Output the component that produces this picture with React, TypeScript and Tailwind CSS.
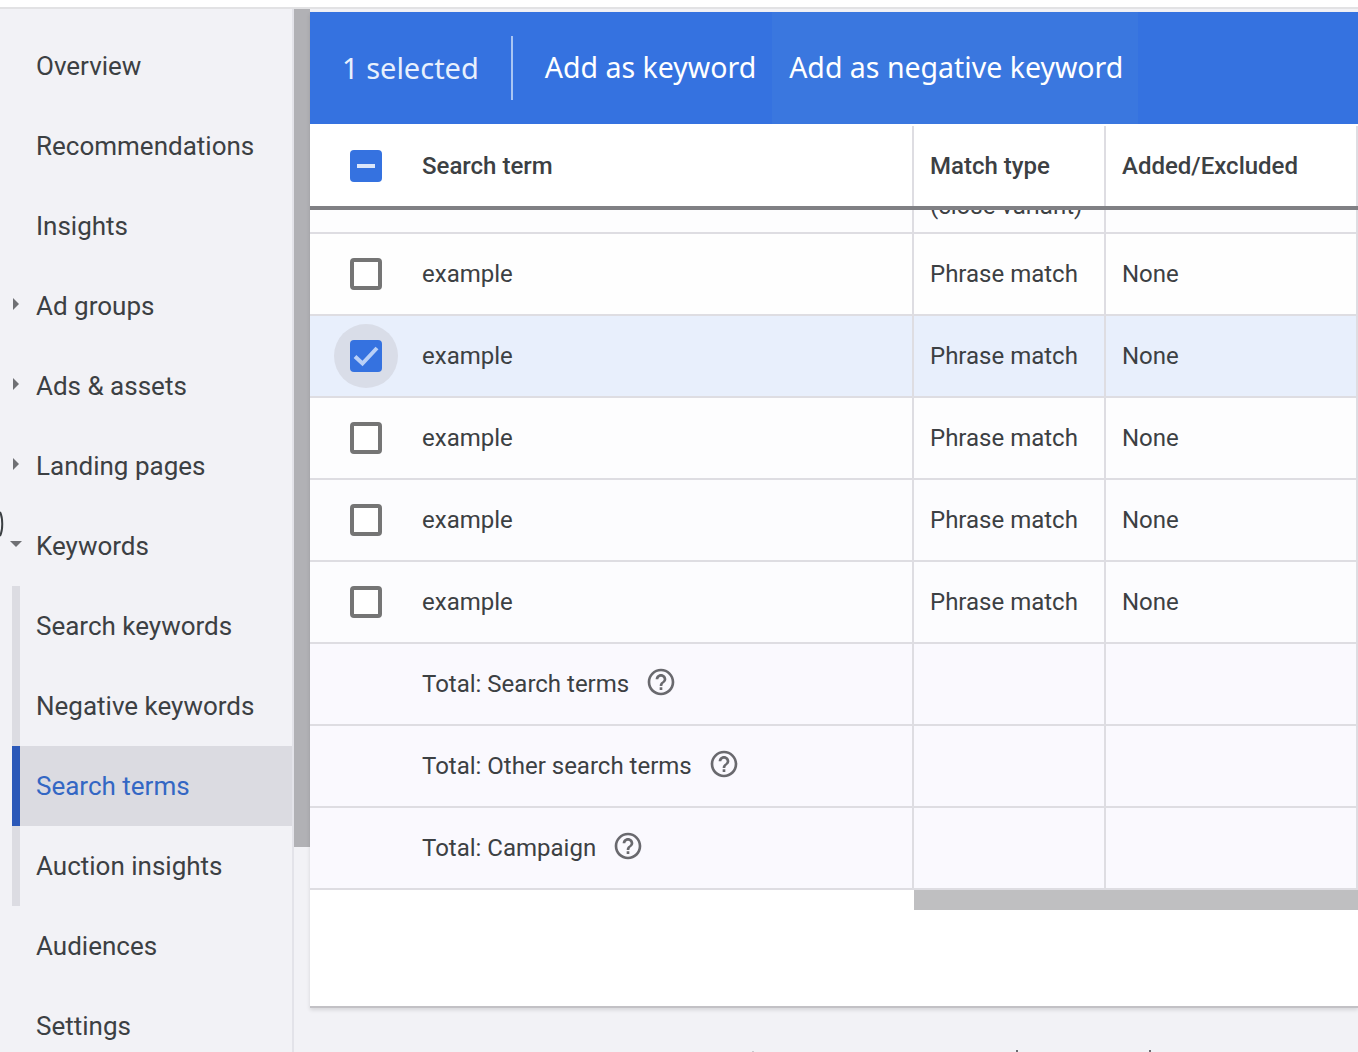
import React from 'react';
import { MdHelpOutline } from 'react-icons/md';

const rowColors = ['bg-[#fefefe]', 'bg-[#e8effc]', 'bg-[#fdfdfe]', 'bg-[#fcfcfe]', 'bg-[#fcfcfe]'];

const Caret = ({ down }: { down?: boolean }) => (
  <svg className="absolute left-[10px] top-[32px] w-[12px] h-[12px]" viewBox="0 0 12 12">
    {down ? <path d="M0 3h12l-6 6z" fill="#6f7074" /> : <path d="M3 0l6 6-6 6z" fill="#6f7074" />}
  </svg>
);

const NavItem = ({ label, caret, active }: { label: string; caret?: 'right' | 'down'; active?: boolean }) => (
  <div className={`relative h-[80px] flex items-center ${active ? 'bg-[#dbdbe1] text-[#3367c4]' : 'text-[#3c4043]'}`}>
    {caret && <Caret down={caret === 'down'} />}
    <span className="pl-[36px]">{label}</span>
  </div>
);

const SubItem = ({ label, active }: { label: string; active?: boolean }) => (
  <div className={`h-[80px] flex items-center border-l-[8px] ml-[12px] ${active ? 'border-[#2b58b8] bg-[#dbdbe1] text-[#3367c4]' : 'border-[#dcdce2] text-[#3c4043]'}`}>
    <span className="pl-[16px]">{label}</span>
  </div>
);

const Checkbox = ({ state }: { state?: 'checked' | 'mixed' }) => {
  if (!state) return <div className="w-[32px] h-[32px] rounded-[4px] border-[4px] border-[#757575] bg-white" />;
  return (
    <div className="w-[32px] h-[32px] rounded-[4px] bg-[#3572e0] flex items-center justify-center">
      {state === 'mixed' ? (
        <div className="w-[18px] h-[4px] bg-[#dbe6fa]" />
      ) : (
        <svg className="w-[32px] h-[32px]" viewBox="0 0 32 32" fill="none">
          <path d="M5 16.5l7.5 7L27 8" stroke="#b9d0f7" strokeWidth="4" />
        </svg>
      )}
    </div>
  );
};

const Cells = ({ rowClass, first, second, third }: { rowClass: string; first: React.ReactNode; second?: string; third?: string }) => (
  <div className={`grid grid-cols-[604px_192px_252px] h-[82px] border-b-[2px] border-[#dedde2] ${rowClass}`}>
    <div className="flex items-center border-r-[2px] border-[#dedde2]">{first}</div>
    <div className="flex items-center pl-[16px] border-r-[2px] border-[#dedde2]">{second}</div>
    <div className="flex items-center pl-[16px] border-r-[2px] border-[#dedde2]">{third}</div>
  </div>
);

const TermRow = ({ index }: { index: number }) => {
  const selected = index === 1;
  return (
    <Cells
      rowClass={rowColors[index]}
      second="Phrase match"
      third="None"
      first={
        <>
          <div className="w-[112px] flex justify-center">
            <div className={`w-[64px] h-[64px] rounded-full flex items-center justify-center ${selected ? 'bg-[#d9dde8]' : ''}`}>
              <Checkbox state={selected ? 'checked' : undefined} />
            </div>
          </div>
          <span>example</span>
        </>
      }
    />
  );
};

const TotalRow = ({ label }: { label: string }) => (
  <Cells
    rowClass="bg-[#faf9fe]"
    first={
      <div className="pl-[112px] flex items-center">
        <span>{label}</span>
        <MdHelpOutline className="ml-[16px] -mt-[4px] text-[#69696e]" size={32} />
      </div>
    }
  />
);

export default function App() {
  return (
    <div className="relative w-[1358px] h-[1052px] overflow-hidden bg-[#f2f2f6] text-[#3c4043] font-['Roboto',sans-serif]">
      <div className="h-[9px] bg-white border-b-[2px] border-[#e2e2e4]" />
      <div className="flex h-[1043px]">
        {/* Side nav */}
        <div className="w-[294px] shrink-0 pt-[17px] text-[26px] border-r-[2px] border-[#e3e3e9]">
          <NavItem label="Overview" />
          <NavItem label="Recommendations" />
          <NavItem label="Insights" />
          <NavItem label="Ad groups" caret="right" />
          <NavItem label="Ads & assets" caret="right" />
          <NavItem label="Landing pages" caret="right" />
          <NavItem label="Keywords" caret="down" />
          <SubItem label="Search keywords" />
          <SubItem label="Negative keywords" />
          <SubItem label="Search terms" active />
          <SubItem label="Auction insights" />
          <NavItem label="Audiences" />
          <NavItem label="Settings" />
        </div>
        <div className="w-[16px] shrink-0">
          <div className="h-[838px] bg-[#b1b1b5]" />
        </div>

        {/* Table card */}
        <div className="flex-1 min-w-0 pt-[3px]">
          <div className="h-[996px] bg-white border-b-[2px] border-[#c2c1c5] shadow-[0_2px_4px_rgba(0,0,0,0.12)] text-[24px]">
            <div className="h-[112px] bg-[#3572e0] flex items-center text-white font-['Noto_Sans',sans-serif]">
              <span className="pl-[32px] pr-[32px] text-[29px] text-[#e8f0fd] border-r-[2px] border-[#a9c5f3] h-[64px] leading-[64px]">1 selected</span>
              <span className="ml-[32px] text-[28.5px] mr-[16px] -mt-[2px]">Add as keyword</span>
              <span className="h-full flex items-center pl-[17px] pr-[15px] pb-[2px] bg-[#3a77df] text-[28.5px]">Add as negative keyword</span>
            </div>

            <div className="grid grid-cols-[604px_192px_252px] h-[86px] border-b-[4px] border-[#808084] font-medium pt-[2px]">
              <div className="flex items-center border-r-[2px] border-[#dedde2]">
                <div className="w-[112px] flex justify-center">
                  <Checkbox state="mixed" />
                </div>
                <span>Search term</span>
              </div>
              <div className="flex items-center pl-[16px] border-r-[2px] border-[#dedde2]">Match type</div>
              <div className="flex items-center pl-[16px] border-r-[2px] border-[#dedde2]">Added/Excluded</div>
            </div>

            {/* row scrolled under the sticky header */}
            <div className="grid grid-cols-[604px_192px_252px] h-[24px] border-b-[2px] border-[#dedde2] bg-[#fdfdfe] overflow-hidden">
              <div className="border-r-[2px] border-[#dedde2]" />
              <div className="pl-[16px] border-r-[2px] border-[#dedde2] leading-[28px] -mt-[18px] whitespace-nowrap h-[42px]">(close variant)</div>
              <div className="border-r-[2px] border-[#dedde2]" />
            </div>

            {[0, 1, 2, 3, 4].map((i) => (
              <TermRow key={i} index={i} />
            ))}
            <TotalRow label="Total: Search terms" />
            <TotalRow label="Total: Other search terms" />
            <TotalRow label="Total: Campaign" />

            <div className="ml-[604px] h-[20px] bg-[#bfbfc1]" />
          </div>
        </div>
      </div>

      {/* clipped edge of something off-screen */}
      <svg className="absolute left-0 top-[510px] w-[4px] h-[28px]" viewBox="0 0 4 28" fill="none">
        <path d="M0 2c3 6 3 18 0 24" stroke="#3c4043" strokeWidth="2" />
      </svg>

      {/* tops of text cut by the bottom edge */}
      <div className="absolute left-[752px] top-[1051px] w-[2px] h-[1px] bg-[#c9c9cd]" />
      <div className="absolute left-[1016px] top-[1050px] w-[2px] h-[2px] bg-[#6b6b70]" />
      <div className="absolute left-[1149px] top-[1050px] w-[2px] h-[2px] bg-[#6b6b70]" />
    </div>
  );
}
